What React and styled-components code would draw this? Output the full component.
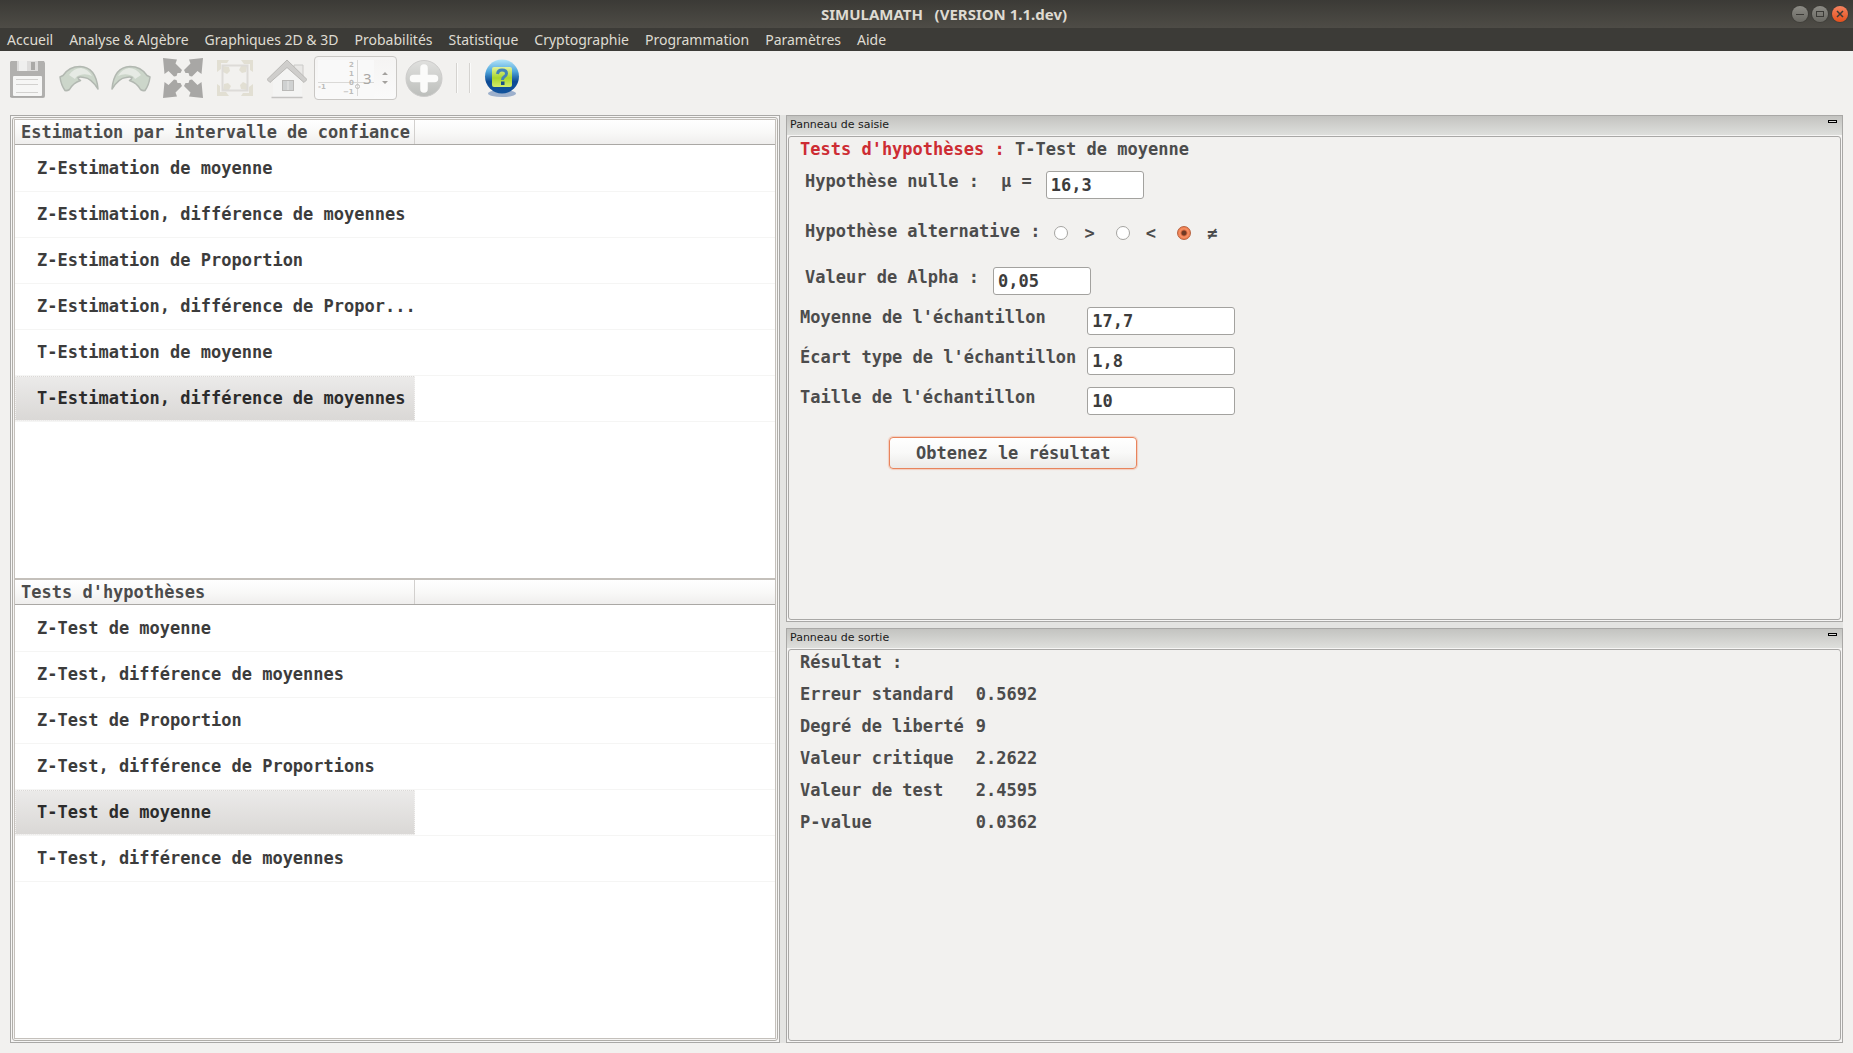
import React, { useState } from "react";
import styled, { createGlobalStyle } from "styled-components";

const mono = '"DejaVu Sans Mono", monospace';
const ui = '"Noto Sans", sans-serif';

const GlobalStyle = createGlobalStyle`
  *, *::before, *::after { box-sizing: border-box; }
  body { margin: 0; background: #f2f1ef; }
  button, input { font: inherit; color: inherit; margin: 0; }
`;

const Window = styled.div`
  min-height: 100vh;
  display: flex;
  flex-direction: column;
  background: #f2f1ef;
  color: #4c4c4c;
  font: bold 17px/20px ${mono};
`;

const TitleBar = styled.header`
  height: 28px;
  display: flex;
  align-items: center;
  padding: 0 5px 0 96px;
  background: linear-gradient(#3b3a36, #4e4c46);
  color: #dfdbd2;
  font: bold 15px/20px ${ui};
`;

const WindowTitle = styled.h1`
  flex: 1;
  margin: 0;
  font: inherit;
  text-align: center;
  white-space: pre;
`;

const WindowControls = styled.div`
  display: flex;
  gap: 4px;
`;

const RoundButton = styled.button`
  width: 16px;
  height: 16px;
  padding: 0;
  display: grid;
  place-items: center;
  border: 0;
  border-radius: 50%;
  color: #3b3a36;
  background: ${(p) =>
    p.$close ? "linear-gradient(#f48360, #e4501c)" : "linear-gradient(#8c8b85, #6a6963)"};
  box-shadow: 0 0 0 1px #37363270;
`;

const MenuBar = styled.nav`
  height: 23px;
  display: flex;
  gap: 16px;
  padding: 0 7px;
  background: #3c3b37;
`;

const MenuButton = styled.button`
  padding: 0;
  border: 0;
  background: none;
  color: #dfdbd2;
  font: 14px/23px ${ui};
  white-space: nowrap;
`;

const Toolbar = styled.div`
  height: 64px;
  display: flex;
  align-items: flex-start;
  gap: 12px;
  padding: 7px 7px 0;
`;

const ToolButton = styled.button`
  width: 40px;
  height: 40px;
  padding: 0;
  border: 0;
  background: none;
  svg { display: block; }
`;

const ToolGroup = styled.div`
  display: flex;
  gap: ${(p) => p.$gap}px;
  align-items: center;
`;

const Separator = styled.span`
  width: 2px;
  height: 30px;
  border-left: 1px solid #d5d3d0;
  border-right: 1px solid #fbfbfa;
`;

const SpinBox = styled.label`
  position: relative;
  width: 83px;
  height: 44px;
  display: flex;
  align-items: center;
  margin-top: -2px;
  border: 1px solid #c9c7c4;
  border-radius: 4px;
  background: linear-gradient(#f5f4f3, #fafafa);
  svg.plane { position: absolute; left: 3px; top: 3px; }
`;

const SpinInput = styled.input`
  position: relative;
  width: 12px;
  margin-left: 48px;
  padding: 0;
  border: 0;
  background: none;
  color: #a9a7a4;
  font: 15px/20px ${ui};
`;

const SpinArrows = styled.svg`
  margin-left: 7px;
`;

const Workspace = styled.main`
  flex: 1;
  display: grid;
  grid-template-columns: 770fr 1057fr;
  column-gap: 6px;
  margin: 0 10px 10px;
  background: #e4e4e2;
`;

const Frame = styled.section`
  display: flex;
  flex-direction: column;
  padding: 1px;
  border: 1px solid #a9a8a6;
  background: #f6f5f4;
  min-width: 0;
`;

const TreeFrame = styled.div`
  flex: 1;
  display: flex;
  flex-direction: column;
  padding: 1px;
  border: 1px solid #b0aea9;
  border-radius: 3px;
`;

const Tree = styled.section`
  flex: 1 1 0;
  border: 1px solid #c4c0bb;
  background: #fff;
`;

const TreeHeader = styled.div`
  height: 25px;
  display: grid;
  grid-template-columns: 400px 1fr;
  border-bottom: 1px solid #aaa8a5;
  background: linear-gradient(#fff, #f9f9f8 50%, #efeeed);
`;

const TreeTitle = styled.h2`
  margin: 0;
  padding: 2px 0 0 6px;
  font: inherit;
  border-right: 1px solid #d2d0ce;
  white-space: nowrap;
`;

const TreeItems = styled.ul`
  margin: 0;
  padding: 1px 0 0;
  list-style: none;
`;

const TreeItem = styled.li`
  height: 46px;
  display: flex;
  border-bottom: 1px solid #f5f5f4;
`;

const ItemButton = styled.button`
  width: 400px;
  padding: 0 0 1px 21px;
  border: 1px dotted ${(p) => (p.$selected ? "#f4f3f2" : "transparent")};
  background: ${(p) => (p.$selected ? "linear-gradient(#ebeae9, #dad8d6)" : "none")};
  color: ${(p) => (p.$selected ? "#2c2c2c" : "#3c3c3c")};
  text-align: left;
  white-space: nowrap;
`;

const RightColumn = styled.div`
  display: grid;
  grid-template-rows: 507fr 415fr;
  row-gap: 6px;
  min-width: 0;
`;

const DockFrame = styled(Frame)`
  padding: 0 1px 1px;
`;

const DockTitle = styled.div`
  height: 19px;
  display: flex;
  justify-content: space-between;
  margin: 0 -1px 1px;
  padding: 0 5px 0 3px;
  background: linear-gradient(#c3c3c0, #dedfdc);
`;

const DockLabel = styled.h2`
  margin: 0;
  color: #1a1a1a;
  font: 11px/18px "DejaVu Sans", sans-serif;
`;

const DockButton = styled.button`
  width: 9px;
  height: 3px;
  margin-top: 4px;
  padding: 0;
  border: 1px solid #000;
  background: #dcdcda;
`;

const DockBody = styled.div`
  flex: 1;
  padding: 2px 11px;
  border: 1px solid #a9a8a6;
  border-radius: 3px;
  background: #f2f1ef;
  white-space: nowrap;
`;

const Heading = styled.h3`
  margin: 0 0 12px;
  font: inherit;
`;

const Accent = styled.span`
  color: #cd2c33;
`;

const Row = styled.div`
  display: flex;
  align-items: flex-start;
  height: ${(p) => p.$height}px;
  padding-left: 5px;
`;

const RowLabel = styled.label`
  margin-right: 14px;
`;

const RowText = styled.span`
  margin-right: 22px;
`;

const RadioGroup = styled.fieldset`
  display: flex;
  align-items: flex-start;
  height: 46px;
  margin: 0;
  padding: 0 0 0 5px;
  border: 0;
`;

const Legend = styled.legend`
  float: left;
  margin-right: 14px;
  padding: 0;
`;

const RadioLabel = styled.label`
  display: flex;
  align-items: center;
  gap: 16px;
  height: 24px;
  margin-right: 21px;
`;

const Radio = styled.input`
  appearance: none;
  width: 14px;
  height: 14px;
  border: 1px solid #a5a4a1;
  border-radius: 50%;
  background: #fff;
  &:checked {
    border-color: #b8623f;
    background: radial-gradient(circle, #6f3a25 0 2px, #d9683f 3px, #f79468 4px, #ee7a4c 6px);
  }
`;

const FieldGrid = styled.div`
  display: grid;
  grid-template-columns: max-content 148px;
  gap: 12px 11px;
`;

const TextInput = styled.input`
  width: ${(p) => p.$width}px;
  height: 28px;
  padding: 0 4px;
  border: 1px solid #a3a29f;
  border-radius: 3px;
  background: #fff;
  color: #3c3c3c;
  outline: none;
`;

const SubmitButton = styled.button`
  height: 32px;
  margin: 22px 0 0 89px;
  padding: 0 26px;
  border: 1px solid #e8845c;
  border-radius: 4px;
  background: linear-gradient(#fff, #f9f9f8 50%, #ebeae8);
  box-shadow: 0 0 1px 1px #f3cdbd;
`;

const Results = styled.table`
  border-collapse: collapse;
  caption { text-align: left; height: 26px; }
  th, td { height: 32px; padding: 0; text-align: left; font-weight: bold; }
  th { padding-right: 12px; }
`;

const MENUS = [
  "Accueil", "Analyse & Algèbre", "Graphiques 2D & 3D", "Probabilités", "Statistique",
  "Cryptographie", "Programmation", "Paramètres", "Aide",
];

const ESTIMATIONS = [
  "Z-Estimation de moyenne",
  "Z-Estimation, différence de moyennes",
  "Z-Estimation de Proportion",
  "Z-Estimation, différence de Propor...",
  "T-Estimation de moyenne",
  "T-Estimation, différence de moyennes",
];

const TESTS = [
  "Z-Test de moyenne",
  "Z-Test, différence de moyennes",
  "Z-Test de Proportion",
  "Z-Test, différence de Proportions",
  "T-Test de moyenne",
  "T-Test, différence de moyennes",
];

const SAMPLE_FIELDS = [
  ["mean", "Moyenne de l'échantillon", "17,7"],
  ["deviation", "Écart type de l'échantillon", "1,8"],
  ["size", "Taille de l'échantillon", "10"],
];

const RESULTS = [
  ["Erreur standard", "0.5692"],
  ["Degré de liberté", "9"],
  ["Valeur critique", "2.2622"],
  ["Valeur de test", "2.4595"],
  ["P-value", "0.0362"],
];

const Icon = ({ children }) => (
  <svg width="40" height="40" viewBox="0 0 40 40" aria-hidden="true">{children}</svg>
);

const SaveIcon = () => (
  <Icon>
    <path d="M4 3h33l1 2v33q0 2-2 2H5q-2 0-2-2V4z" fill="#b1b0ae" />
    <path d="M10 3h21v10H10z" fill="#dddcdb" />
    <path d="M12 3h8v10h-8z" fill="#efefee" />
    <rect x="24" y="4" width="4" height="8" fill="#aaa9a7" />
    <rect x="6" y="18" width="29" height="20" rx="1" fill="#f6f6f5" />
    <path d="M9 21.500h22M9 26.500h22M9 34.500h22" stroke="#d2d1cf" />
    <path d="M3 38.500h34" stroke="#aaa9a7" />
  </Icon>
);

const ArrowShape = () => (
  <>
    <path
      d="M1 19l3-1.500Q10 8.500 21 8.500Q37 9 39 31Q32 20 25 19.500Q21 18.500 19 19.500Q19.500 22 21.500 22.500Q14 25 10.500 31.500Q8 33 6 32.500Q2 27 1 19z"
      fill="#ccd6ca" stroke="#b2b8b1" strokeWidth="1.500" strokeLinejoin="round"
    />
    <path d="M10 17q5-7 12-7q7 1 11 8q-6-3-12-1q-4 1-5 4z" fill="#e6eae4" />
  </>
);

const UndoIcon = () => <Icon><ArrowShape /></Icon>;
const RedoIcon = () => <Icon><g transform="translate(40 0) scale(-1 1)"><ArrowShape /></g></Icon>;

const ExpandIcon = () => (
  <Icon>
    {[[1, 1], [-1, 1], [1, -1], [-1, -1]].map(([x, y]) => (
      <path
        key={`${x}${y}`}
        transform={`translate(20 20) scale(${x} ${y}) translate(-20 -20)`}
        d="M0 0l14 1.500l-1.500 4l6.500 6.500l-1.500 3h-3l-1 3l-2.500 .5l-5.500-5.500l-4 3z"
        fill="#a8a7a5"
      />
    ))}
  </Icon>
);

const FitIcon = () => (
  <Icon>
    {[0, 90, 180, 270].map((angle) => (
      <path
        key={angle}
        transform={`rotate(${angle} 20 20)`}
        d="M2 2h12l-2 3h-6v6l-4 3zM8 8l6 1l1 4l-3 3l-4-2z"
        fill="#e2dfd3"
      />
    ))}
    <rect x="7.500" y="7.500" width="25" height="25" fill="none" stroke="#dddbd8" strokeWidth="2" />
  </Icon>
);

const HomeIcon = () => (
  <Icon>
    <path d="M27 6h9v14h-9z" fill="#e9e8e6" stroke="#cbcac8" />
    <path d="M6 19L20 5l15 14v19H6z" fill="#f4f4f3" />
    <path d="M4.500 38.500h31" stroke="#c4c3c1" strokeWidth="1.500" />
    <path d="M20 1L0 20.500l3 3L20 8.500l17 15l3-3z" fill="#cfcecc" stroke="#bab9b6" />
    <rect x="15.500" y="21.500" width="11" height="10" fill="#cfd1d1" stroke="#bab9b7" />
    <path d="M21 22v9" stroke="#e9e9e8" />
  </Icon>
);

const PlusIcon = () => (
  <Icon>
    <defs>
      <linearGradient id="plus-disc" x1="0" y1="0" x2="0" y2="1">
        <stop offset="0" stopColor="#e0e0de" />
        <stop offset="1" stopColor="#bcbebb" />
      </linearGradient>
    </defs>
    <circle cx="20" cy="19.500" r="18" fill="url(#plus-disc)" stroke="#cdcccb" />
    <path d="M20 9v21M9.500 19.500h21" stroke="#fbfbfa" strokeWidth="7.500" strokeLinecap="round" />
  </Icon>
);

const HelpIcon = () => (
  <Icon>
    <defs>
      <linearGradient id="help-ball" x1="0" y1="0" x2="0" y2="1">
        <stop offset="0" stopColor="#b4e4f8" />
        <stop offset=".35" stopColor="#4fa6dc" />
        <stop offset=".65" stopColor="#0d4a94" />
        <stop offset="1" stopColor="#12549c" />
      </linearGradient>
      <linearGradient id="help-card" x1="0" y1="0" x2="0" y2="1">
        <stop offset="0" stopColor="#e2f29c" />
        <stop offset=".55" stopColor="#a8d62c" />
        <stop offset="1" stopColor="#d4ec6a" />
      </linearGradient>
    </defs>
    <ellipse cx="20" cy="35.500" rx="14" ry="3.500" fill="#9db0cc" />
    <circle cx="20" cy="18.500" r="17" fill="url(#help-ball)" />
    <rect x="10" y="9" width="20" height="20" rx="2" fill="url(#help-card)" />
    <path d="M15.500 16q.5-4 4.500-4q4.500 0 4.500 3.500q0 2-2.500 3.500q-1.500 1-1.500 3" fill="none" stroke="#4183b8" strokeWidth="3" />
    <rect x="19" y="23.500" width="3.500" height="3.500" fill="#174f8a" />
  </Icon>
);

const PlaneDrawing = () => (
  <svg className="plane" width="56" height="38" viewBox="0 0 56 38" aria-hidden="true">
    <rect width="56" height="38" fill="#f9f9f9" />
    <path d="M0 22.500h56M39.500 0v36" stroke="#dad9d7" />
    <circle cx="39.500" cy="26.500" r="2" fill="none" stroke="#bdbcba" />
    <g fill="#bdbcba" fontSize="7" fontFamily="DejaVu Sans, sans-serif">
      <text x="31" y="7">2</text>
      <text x="31" y="16">1</text>
      <text x="31" y="25">0</text>
      <text x="25" y="34">−1</text>
      <text x="0" y="29">-1</text>
    </g>
  </svg>
);

function TreeList({ title, items, initial }) {
  const [selected, setSelected] = useState(initial);
  return (
    <Tree>
      <TreeHeader><TreeTitle>{title}</TreeTitle></TreeHeader>
      <TreeItems>
        {items.map((item, index) => (
          <TreeItem key={item}>
            <ItemButton
              type="button"
              $selected={index === selected}
              aria-pressed={index === selected}
              onClick={() => setSelected(index)}
            >
              {item}
            </ItemButton>
          </TreeItem>
        ))}
      </TreeItems>
    </Tree>
  );
}

function Dock({ title, children }) {
  return (
    <DockFrame>
      <DockTitle>
        <DockLabel>{title}</DockLabel>
        <DockButton type="button" aria-label="Réduire" />
      </DockTitle>
      <DockBody>{children}</DockBody>
    </DockFrame>
  );
}

export default function App() {
  return (
    <Window>
      <GlobalStyle />
      <TitleBar>
        <WindowTitle>{"SIMULAMATH   (VERSION 1.1.dev)"}</WindowTitle>
        <WindowControls>
          <RoundButton type="button" aria-label="Minimiser">
            <svg width="8" height="8"><path d="M0 4.500h8" stroke="currentColor" /></svg>
          </RoundButton>
          <RoundButton type="button" aria-label="Agrandir">
            <svg width="8" height="8"><rect x=".5" y="1.500" width="7" height="5" fill="none" stroke="currentColor" /></svg>
          </RoundButton>
          <RoundButton type="button" $close aria-label="Fermer">
            <svg width="8" height="8"><path d="M1 1l6 6M7 1l-6 6" stroke="currentColor" strokeWidth="1.500" /></svg>
          </RoundButton>
        </WindowControls>
      </TitleBar>

      <MenuBar>
        {MENUS.map((menu) => <MenuButton key={menu} type="button">{menu}</MenuButton>)}
      </MenuBar>

      <Toolbar>
        <ToolButton type="button" disabled aria-label="Enregistrer"><SaveIcon /></ToolButton>
        <ToolButton type="button" disabled aria-label="Annuler"><UndoIcon /></ToolButton>
        <ToolButton type="button" disabled aria-label="Rétablir"><RedoIcon /></ToolButton>
        <ToolButton type="button" disabled aria-label="Plein écran"><ExpandIcon /></ToolButton>
        <ToolButton type="button" disabled aria-label="Ajuster"><FitIcon /></ToolButton>
        <ToolGroup $gap={7}>
          <ToolButton type="button" disabled aria-label="Maison"><HomeIcon /></ToolButton>
          <SpinBox>
            <PlaneDrawing />
            <SpinInput defaultValue="3" disabled aria-label="Graduation" />
            <SpinArrows width="6" height="14" aria-hidden="true">
              <path d="M0 4l3-3l3 3zM0 10l3 3l3-3z" fill="#a3a19e" />
            </SpinArrows>
          </SpinBox>
          <ToolButton type="button" disabled aria-label="Ajouter"><PlusIcon /></ToolButton>
        </ToolGroup>
        <ToolGroup $gap={11}>
          <Separator />
          <Separator />
          <ToolButton type="button" aria-label="Aide"><HelpIcon /></ToolButton>
        </ToolGroup>
      </Toolbar>

      <Workspace>
        <Frame>
          <TreeFrame>
            <TreeList title="Estimation par intervalle de confiance" items={ESTIMATIONS} initial={5} />
            <TreeList title="Tests d'hypothèses" items={TESTS} initial={4} />
          </TreeFrame>
        </Frame>

        <RightColumn>
          <Dock title="Panneau de saisie">
            <Heading><Accent>Tests d'hypothèses :</Accent> T-Test de moyenne</Heading>
            <Row $height={50}>
              <RowText>Hypothèse nulle :</RowText>
              <RowLabel htmlFor="mu">μ =</RowLabel>
              <TextInput id="mu" $width={98} defaultValue="16,3" />
            </Row>
            <RadioGroup>
              <Legend>Hypothèse alternative :</Legend>
              {[">", "<", "≠"].map((sign) => (
                <RadioLabel key={sign}>
                  <Radio type="radio" name="alternative" defaultChecked={sign === "≠"} />
                  {sign}
                </RadioLabel>
              ))}
            </RadioGroup>
            <Row $height={40}>
              <RowLabel htmlFor="alpha">Valeur de Alpha :</RowLabel>
              <TextInput id="alpha" $width={98} defaultValue="0,05" />
            </Row>
            <FieldGrid>
              {SAMPLE_FIELDS.map(([id, label, value]) => (
                <React.Fragment key={id}>
                  <label htmlFor={id}>{label}</label>
                  <TextInput id={id} $width={148} defaultValue={value} />
                </React.Fragment>
              ))}
            </FieldGrid>
            <SubmitButton type="button">Obtenez le résultat</SubmitButton>
          </Dock>

          <Dock title="Panneau de sortie">
            <Results>
              <caption>Résultat :</caption>
              <tbody>
                {RESULTS.map(([name, value]) => (
                  <tr key={name}><th scope="row">{name}</th><td>{value}</td></tr>
                ))}
              </tbody>
            </Results>
          </Dock>
        </RightColumn>
      </Workspace>
    </Window>
  );
}
